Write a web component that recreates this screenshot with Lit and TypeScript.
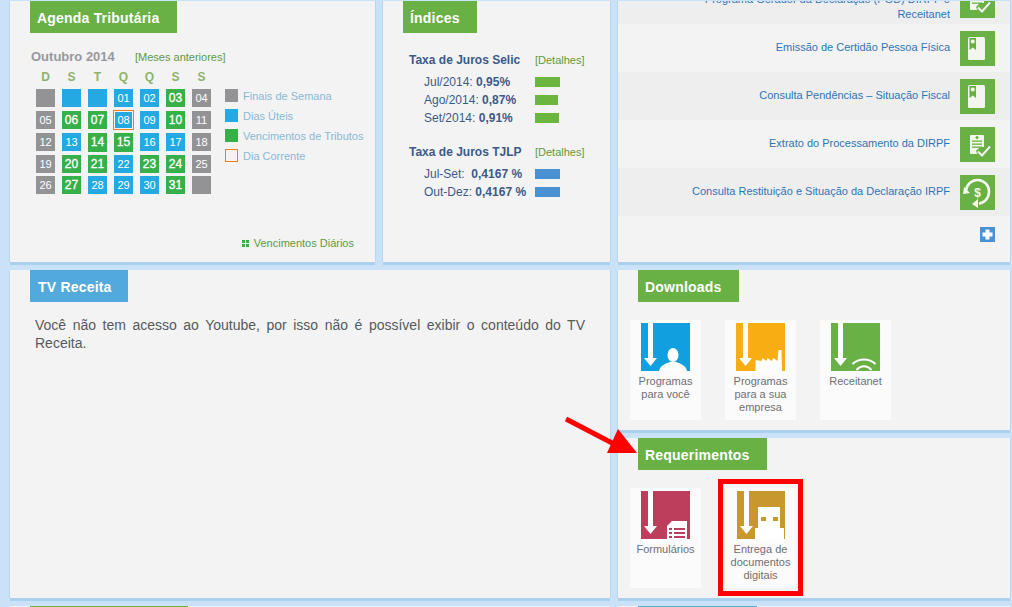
import { LitElement, html, css, svg } from "lit";
import { customElement } from "lit/decorators.js";

type Kind = "g" | "b" | "v";
const cells: [string, Kind][] = [
  ["", "g"], ["", "b"], ["", "b"], ["01", "b"], ["02", "b"], ["03", "v"], ["04", "g"],
  ["05", "g"], ["06", "v"], ["07", "v"], ["08", "b"], ["09", "b"], ["10", "v"], ["11", "g"],
  ["12", "g"], ["13", "b"], ["14", "v"], ["15", "v"], ["16", "b"], ["17", "b"], ["18", "g"],
  ["19", "g"], ["20", "v"], ["21", "v"], ["22", "b"], ["23", "v"], ["24", "v"], ["25", "g"],
  ["26", "g"], ["27", "v"], ["28", "b"], ["29", "b"], ["30", "b"], ["31", "v"], ["", "g"],
];

const arrow = (x = 7) => svg`<path fill="#fff" d="M${x} 0h5v35h4l-6.500 8-6.500-8h4z"/>`;

const icons = {
  person: svg`${arrow()}<ellipse cx="32" cy="32" rx="5.500" ry="7" fill="#fff"/><path fill="#fff" d="M18 48c1-5 5-7 11-9h6c6 2 10 4 11 9z"/>`,
  factory: svg`${arrow()}<path fill="#fff" d="M19.500 48V37l6 1 1-3 4 3 1-3 4 3 2-3 4 3 1-11h3l.5 23z"/>`,
  wifi: svg`${arrow()}<g fill="none" stroke="#fff" stroke-width="2.200"><path d="M21.500 41c6.500-6 16.500-6 23 0"/><path d="M25.500 47c4.500-5 10.500-5 15 0"/></g>`,
  form: svg`${arrow()}<path fill="#fff" d="M31 30h15v18H26V35z"/><path fill="#bc3d5c" d="M28 37h3v2h-3zM33 37h11v2H33zM28 41h3v2h-3zM33 41h11v2H33zM28 45h3v2h-3zM33 45h11v2H33z"/>`,
  usb: svg`${arrow()}<path fill="#fff" d="M21 16h22v21h4v11H18V37h3z"/><path fill="#c8982f" d="M24 26h5v4h-5zM36 26h5v4h-5z"/>`,
};

const tileIcon = (bg: string, body: unknown, w = 49) => html`
  <svg class="ticon" width=${w} height="48" viewBox="0 0 ${w} 48"><rect width=${w} height="48" fill=${bg}/>${body}</svg>`;

const book = svg`<rect x="8" y="6" width="17" height="23" rx="1.500" fill="#f3f6ef"/><path fill="#69b045" d="M9.500 7h6.500v12l-3.200-2.500L9.500 19z"/><circle cx="12.800" cy="10.500" r="2" fill="#f3f6ef"/>`;
const extract = svg`<rect x="10" y="8" width="14" height="19" rx="1" fill="#f3f6ef"/><g fill="#69b045"><circle cx="17" cy="10.500" r="1.500"/><rect x="12" y="13.500" width="10" height="1.300"/><rect x="12" y="16.500" width="10" height="1.300"/><rect x="12" y="19.500" width="10" height="1.300"/></g><path fill="#69b045" d="M16 24l4-4 10 0-8 11h-3z"/><path fill="none" stroke="#f3f6ef" stroke-width="2" d="M18 24.500l4 4 8-9"/>`;
const refund = svg`<path fill="none" stroke="#f3f6ef" stroke-width="2.600" d="M6 16a11.500 11.500 0 0 1 23 1c0 6-5 11-10 11.500"/><path fill="#f3f6ef" d="M4 12l6 6-7 1zM18 24v9l-6-4z"/><text x="17.500" y="21.500" text-anchor="middle" class="dollar">$</text>`;

const rows: [string[], unknown][] = [
  [["Programa Gerador da Declaração (PGD) DIRPF e", "Receitanet"], extract],
  [["Emissão de Certidão Pessoa Física"], book],
  [["Consulta Pendências – Situação Fiscal"], book],
  [["Extrato do Processamento da DIRPF"], extract],
  [["Consulta Restituição e Situação da Declaração IRPF"], refund],
];

const selic: [string, string, number][] = [
  ["Jul/2014:", "0,95%", 25],
  ["Ago/2014:", "0,87%", 23],
  ["Set/2014:", "0,91%", 24],
];
const tjlp: [string, string, number][] = [
  ["Jul-Set:\u00a0", "0,4167 %", 25],
  ["Out-Dez:", "0,4167 %", 25],
];

@customElement("app-root")
export class AppRoot extends LitElement {
  static styles = css`
    :host {
      display: block;
      position: relative;
      width: 1012px;
      height: 607px;
      overflow: hidden;
      background: #c9e2f8;
      font-family: "Liberation Sans", Arial, sans-serif;
    }
    .page {
      display: grid;
      grid-template-columns: 365px 227px 392px;
      grid-template-rows: 261px 328px 40px;
      gap: 8px;
      padding: 1px 0 0 10px;
    }
    .panel {
      background: #f3f3f3;
      box-shadow: 0 3px 0 #a9d1ee, -1px 0 0 #b4d7f3, 1px 0 0 #b4d7f3;
      display: flex;
      flex-direction: column;
      overflow: hidden;
      min-height: 0;
    }
    .wide { grid-column: span 2; }
    .stack { display: flex; flex-direction: column; gap: 8px; min-height: 0; }
    .stack .panel { height: 160px; }
    .hd {
      margin-left: 20px;
      height: 32px;
      line-height: 34px;
      background: #69b045;
      color: #fff;
      font-weight: bold;
      font-size: 14px;
      letter-spacing: 0.2px;
      box-sizing: border-box;
      padding-left: 7px;
      flex: none;
    }
    .hd.blue { background: #52a9dc; padding-left: 8px; }
    .w-agenda { width: 147px; }
    .w-ind { width: 74px; }
    .w-tv { width: 98px; }
    .w-down { width: 101px; }
    .w-req { width: 129px; }
    .w-next { width: 158px; }
    .w-next2 { width: 119px; }

    .month { display: flex; margin: 15px 0 0 21px; height: 16px; align-items: center; }
    .month b { width: 104px; font-size: 13px; color: #98989c; }
    .month a { font-size: 11px; color: #5f9a3c; position: relative; top: 1px; }
    .dow {
      display: grid;
      grid-template-columns: repeat(7, 19px);
      column-gap: 7px;
      margin: 6px 0 0 26px;
      height: 19px;
      font-size: 12px;
      line-height: 14px;
      font-weight: bold;
      color: #8db368;
      text-align: center;
    }
    .calrow { display: flex; gap: 14px; margin-left: 26px; }
    .cal {
      display: grid;
      grid-template-columns: repeat(7, 19px);
      grid-template-rows: 22px 22px 22px 21px 18px;
      column-gap: 7px;
      align-items: start;
    }
    .c {
      height: 18px;
      line-height: 18px;
      text-align: center;
      color: #fff;
      font-size: 11px;
    }
    .c.g { background: #939396; }
    .c.b { background: #25a9e3; }
    .c.v { background: #38b04a; font-size: 12px; -webkit-text-stroke: 0.3px #fff; }
    .c.tall { height: 19px; }
    .c.now { box-shadow: inset 0 0 0 1px #f3f3f3, 0 0 0 1px #ea8022; }
    .legend { display: flex; flex-direction: column; gap: 7px; }
    .li { display: flex; align-items: center; gap: 5px; height: 13px; font-size: 11px; color: #8ab8d4; white-space: nowrap; }
    .sw { width: 13px; height: 13px; box-sizing: border-box; flex: none; }
    .sw.g { background: #939396; }
    .sw.b { background: #25a9e3; }
    .sw.v { background: #38b04a; }
    .sw.o { border: 1px solid #ea8022; }
    .daily {
      margin: auto 21px 12px auto;
      display: flex;
      align-items: center;
      gap: 5px;
      height: 14px;
      font-size: 11px;
      color: #5b9a46;
    }
    .grip { display: grid; grid-template-columns: 3px 3px; gap: 1px; }
    .grip i { width: 3px; height: 3px; background: #38b04a; }

    .ix { margin: 20px 0 0 26px; }
    .ix + .ix { margin-top: 18px; }
    .ixh { display: grid; grid-template-columns: 126px auto; height: 14px; line-height: 14px; margin-bottom: 6px; align-items: center; }
    .ixh b { font-size: 12px; color: #3c5a88; white-space: nowrap; }
    .ixh a { font-size: 11px; color: #5f9a3c; }
    .ixr { display: grid; grid-template-columns: 126px auto; height: 18px; align-items: center; }
    .ixr span { padding-left: 15px; font-size: 12px; color: #3c5a88; white-space: nowrap; }
    .bar { height: 10px; }
    .bar.gr { background: #6cb53f; }
    .bar.bl { background: #4a91d4; }

    .list { margin-top: -25px; flex: none; }
    .row {
      display: flex;
      justify-content: flex-end;
      height: 48px;
      padding: 7px 15px 0 0;
      box-sizing: border-box;
      gap: 10px;
      text-align: right;
    }
    .row:nth-child(odd) { background: #eeeeee; }
    .row p { margin: 9px 0 0; font-size: 11px; line-height: 15px; color: #2f74b5; white-space: nowrap; }
    .row svg { flex: none; }
    .dollar { font: bold 12px "Liberation Sans", sans-serif; fill: #f3f6ef; }
    .plus {
      width: 15px; height: 15px;
      margin: 11px 15px 0 auto;
      background: #4a91d4;
      flex: none;
      display: block;
    }

    .tv {
      margin: 14px 25px 0 25px;
      font-size: 14px;
      line-height: 18px;
      color: #555a60;
      text-align: justify;
    }

    .tiles { display: flex; gap: 24px; margin: 18px 12px 0; }
    .tile {
      width: 71px;
      height: 100px;
      background: #fbfbfb;
      padding-top: 3px;
      box-sizing: border-box;
      display: flex;
      flex-direction: column;
      align-items: center;
      text-align: center;
      font-size: 11px;
      line-height: 13px;
      color: #6f6f75;
    }
    .ticon { display: block; flex: none; margin-bottom: 4px; }

    .overlay { position: absolute; left: 0; top: 0; pointer-events: none; }
    .mark {
      position: absolute;
      left: 718px;
      top: 479px;
      width: 85px;
      height: 117px;
      box-sizing: border-box;
      border: 5px solid #f00;
      pointer-events: none;
    }
  `;

  private tile(label: string[], icon: unknown) {
    return html`<div class="tile">${icon}${label.map((l) => html`<div>${l}</div>`)}</div>`;
  }

  private rate(items: [string, string, number][], color: string) {
    return items.map(
      ([k, v, w]) => html`<div class="ixr">
        <span>${k} <b>${v}</b></span>
        <div class="bar ${color}" style="width:${w}px"></div>
      </div>`
    );
  }

  render() {
    const dow = ["D", "S", "T", "Q", "Q", "S", "S"];
    return html`
      <div class="page">
        <section class="panel">
          <div class="hd w-agenda">Agenda Tributária</div>
          <div class="month"><b>Outubro 2014</b><a>[Meses anteriores]</a></div>
          <div class="dow">${dow.map((d) => html`<span>${d}</span>`)}</div>
          <div class="calrow">
            <div class="cal">
              ${cells.map(
                ([t, k]) => html`<div class="c ${k} ${t === "08" ? "now" : ""} ${t === "14" || t === "15" ? "tall" : ""}">${t}</div>`
              )}
            </div>
            <div class="legend">
              <div class="li"><i class="sw g"></i>Finais de Semana</div>
              <div class="li"><i class="sw b"></i>Dias Úteis</div>
              <div class="li"><i class="sw v"></i>Vencimentos de Tributos</div>
              <div class="li"><i class="sw o"></i>Dia Corrente</div>
            </div>
          </div>
          <div class="daily"><span class="grip"><i></i><i></i><i></i><i></i></span>Vencimentos Diários</div>
        </section>

        <section class="panel">
          <div class="hd w-ind">Índices</div>
          <div class="ix">
            <div class="ixh"><b>Taxa de Juros Selic</b><a>[Detalhes]</a></div>
            ${this.rate(selic, "gr")}
          </div>
          <div class="ix">
            <div class="ixh"><b>Taxa de Juros TJLP</b><a>[Detalhes]</a></div>
            ${this.rate(tjlp, "bl")}
          </div>
        </section>

        <section class="panel">
          <div class="list">
            ${rows.map(
              ([lines, ic]) => html`<div class="row">
                <p>${lines.map((l) => html`${l}<br />`)}</p>
                <svg width="35" height="35" viewBox="0 0 35 35"><rect width="35" height="35" fill="#69b045" />${ic}</svg>
              </div>`
            )}
          </div>
          <svg class="plus" viewBox="0 0 15 15"><path fill="#fff" d="M5.500 2.500h4v3h3v4h-3v3h-4v-3h-3v-4h3z" /></svg>
        </section>

        <section class="panel wide">
          <div class="hd blue w-tv">TV Receita</div>
          <div class="tv">Você não tem acesso ao Youtube, por isso não é possível exibir o conteúdo do TV Receita.</div>
        </section>

        <div class="stack">
          <section class="panel">
            <div class="hd w-down">Downloads</div>
            <div class="tiles">
              ${this.tile(["Programas", "para você"], tileIcon("#129fdf", icons.person))}
              ${this.tile(["Programas", "para a sua", "empresa"], tileIcon("#f8ad13", icons.factory))}
              ${this.tile(["Receitanet"], tileIcon("#69b045", icons.wifi))}
            </div>
          </section>
          <section class="panel">
            <div class="hd w-req">Requerimentos</div>
            <div class="tiles">
              ${this.tile(["Formulários"], tileIcon("#bc3d5c", icons.form))}
              ${this.tile(["Entrega de", "documentos", "digitais"], tileIcon("#c8982f", icons.usb, 48))}
            </div>
          </section>
        </div>

        <section class="panel wide"><div class="hd w-next"></div></section>
        <section class="panel"><div class="hd blue w-next2"></div></section>
      </div>

      <svg class="overlay" width="1012" height="607" viewBox="0 0 1012 607">
        <path d="M566 419l48 25" stroke="#f00" stroke-width="5" fill="none" />
        <path d="M618 429l-11 24h30z" fill="#f00" />
      </svg>
      <div class="mark"></div>
    `;
  }
}
